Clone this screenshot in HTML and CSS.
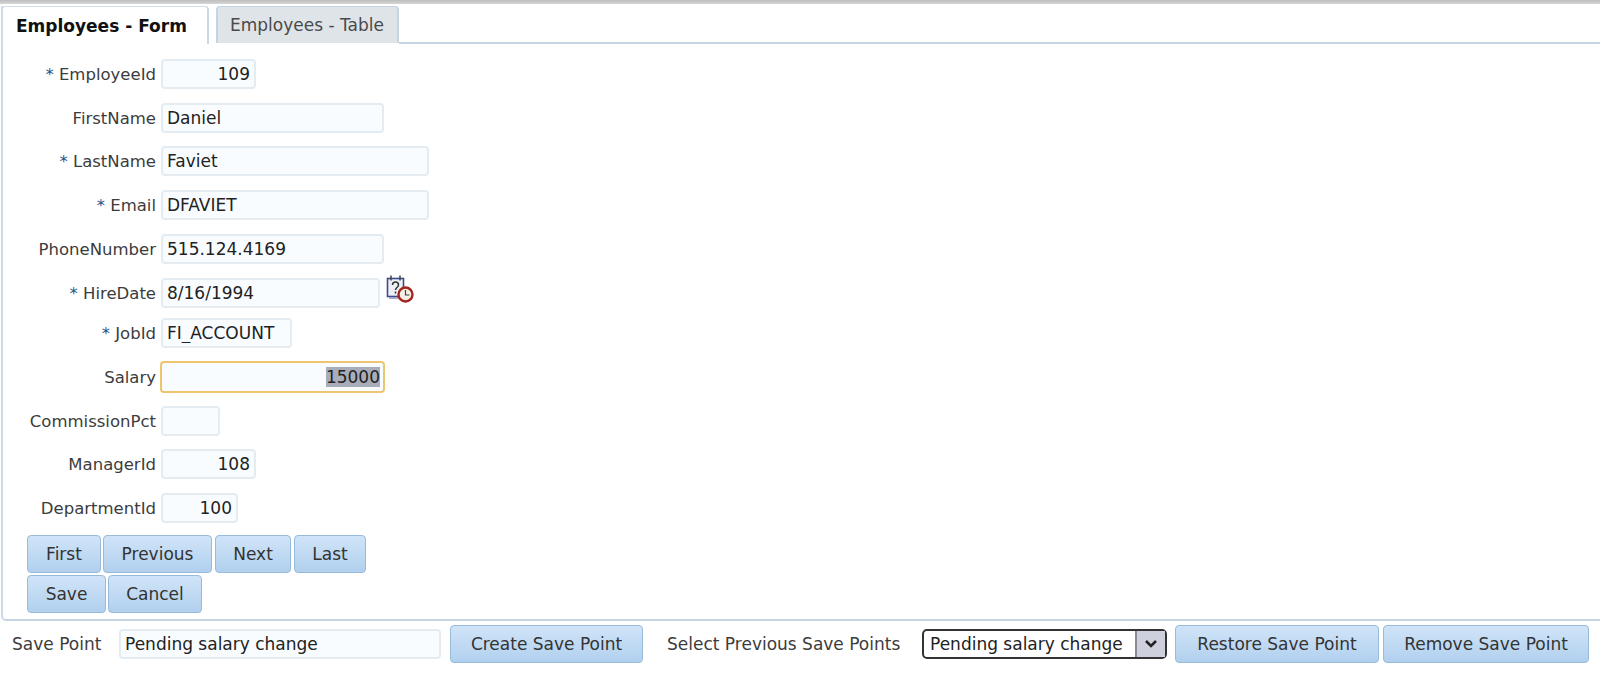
FILE: index.html
```html
<!DOCTYPE html>
<html lang="en">
<head>
<meta charset="utf-8">
<title>Employees - Form</title>
<link rel="stylesheet" href="styles.css">
</head>
<body>
<div class="topbar"></div>
<div class="panel">
  <div class="tabs">
    <div class="tab tab-active">Employees - Form</div>
    <div class="tab tab-idle">Employees - Table</div>
    <div class="tab-rest"></div>
  </div>
  <form class="form">
    <div class="row row-first"><label class="label"><span class="req">*</span> EmployeeId</label><input class="field w-95 num" value="109"></div>
    <div class="row"><label class="label">FirstName</label><input class="field w-223" value="Daniel"></div>
    <div class="row row-43"><label class="label"><span class="req">*</span> LastName</label><input class="field w-268" value="Faviet"></div>
    <div class="row"><label class="label"><span class="req">*</span> Email</label><input class="field w-268" value="DFAVIET"></div>
    <div class="row"><label class="label">PhoneNumber</label><input class="field w-223" value="515.124.4169"></div>
    <div class="row">
      <label class="label"><span class="req">*</span> HireDate</label><input class="field w-219" value="8/16/1994">
      <svg class="cal" width="30" height="30" viewBox="0 0 30 30" aria-hidden="true">
        <rect x="2.5" y="4.5" width="16" height="18" fill="#eef0f8" stroke="#3f4a8c" stroke-width="1.6"/>
        <path d="M4 24h16" stroke="#8e94bd" stroke-width="1.5"/>
        <path d="M6 1.5v5M15 1.5v5" stroke="#444" stroke-width="1.5"/>
        <path d="M7.5 11c0-4 6-4 6 0 0 2.500-3 2.500-3 5M10.500 17.500v2" fill="none" stroke="#333" stroke-width="1.500"/>
        <circle cx="20.500" cy="20.500" r="7" fill="#f6efe4" stroke="#a4241f" stroke-width="2.400"/>
        <path d="M20.500 16v5h4" fill="none" stroke="#444" stroke-width="1.200"/>
      </svg>
    </div>
    <div class="row row-40"><label class="label"><span class="req">*</span> JobId</label><input class="field w-131" value="FI_ACCOUNT"></div>
    <div class="row row-salary"><label class="label">Salary</label><input class="field field-focus num" value="15000" autofocus onfocus="this.select()"></div>
    <div class="row row-commission"><label class="label">CommissionPct</label><input class="field w-59" value=""></div>
    <div class="row row-43"><label class="label">ManagerId</label><input class="field w-95 num" value="108"></div>
    <div class="row"><label class="label">DepartmentId</label><input class="field w-77 num" value="100"></div>
    <div class="btn-row btn-row-first">
      <button type="button" class="btn b-first">First</button>
      <button type="button" class="btn b-prev">Previous</button>
      <button type="button" class="btn b-next">Next</button>
      <button type="button" class="btn b-last">Last</button>
    </div>
    <div class="btn-row">
      <button type="button" class="btn b-save">Save</button>
      <button type="button" class="btn b-cancel">Cancel</button>
    </div>
  </form>
</div>
<div class="savebar">
  <span class="sp-label">Save Point</span>
  <input class="field sp-input" value="Pending salary change">
  <button type="button" class="btn b-create">Create Save Point</button>
  <span class="sel-label">Select Previous Save Points</span>
  <div class="select-wrap">
    <select class="select"><option>Pending salary change</option></select>
    <span class="select-arrow">
      <svg width="14" height="10" viewBox="0 0 14 10" aria-hidden="true"><path d="M2 2l5 5 5-5" fill="none" stroke="#222" stroke-width="2.600"/></svg>
    </span>
  </div>
  <button type="button" class="btn b-restore">Restore Save Point</button>
  <button type="button" class="btn b-remove">Remove Save Point</button>
</div>
</body>
</html>
```
FILE: styles.css
```css
* { box-sizing: border-box; }
html, body { margin: 0; padding: 0; background: #fff; }
body {
  width: 1600px;
  height: 676px;
  overflow: hidden;
  font-family: "DejaVu Sans", sans-serif;
  font-size: 17px;
  color: #333;
}
.topbar {
  height: 4px;
  background: linear-gradient(#bdbdbd, #d6d6d6);
  margin-bottom: 2px;
}
.panel {
  height: 615px;
  margin-left: 1px;
  border-left: 2px solid #cddaea;
  border-bottom: 2px solid #c6d3e3;
  border-bottom-left-radius: 5px;
}
.tabs { display: flex; height: 38px; }
.tab {
  display: flex;
  align-items: center;
  height: 38px;
  border: 1px solid #cfdbe8;
  border-bottom: 0;
  border-radius: 4px 4px 0 0;
}
.tab-active {
  width: 207px;
  margin-left: -1px;
  padding-left: 13px;
  font-weight: bold;
  font-size: 17px;
  color: #111;
  background: #fff;
  border-right: 2px solid #cad7e6;
}
.tab-idle {
  width: 183px;
  margin-left: 7px;
  padding-left: 12px;
  height: 37px;
  color: #4a4a4a;
  background: #dfe4e9;
  border-color: #c5d3e2;
  border-left-width: 2px;
  border-right-width: 2px;
}
.tab-rest { flex: 1; height: 38px; border-bottom: 2px solid #c6d3e3; }
.form { padding-top: 15px; padding-left: 23px; }
.row { display: flex; align-items: center; height: 30px; margin-top: 14px; }
.row-first { margin-top: 0; }
.row-43 { margin-top: 13px; }
.row-40 { margin-top: 10px; }
.row-salary { margin-top: 13px; height: 32px; }
.row-commission { margin-top: 13px; }
.label {
  width: 130px;
  margin-right: 5px;
  text-align: right;
  white-space: nowrap;
  color: #3c3c3c;
  font-size: 16.5px;
}
.req { color: #1d4f86; }
.field {
  height: 30px;
  padding: 0 4px;
  border: 2px solid #e4ecf1;
  border-radius: 4px;
  background: #f9fcff;
  font: inherit;
  color: #222;
  outline: none;
}
.field::selection { background: #a9adb9; color: #222; }
.num { text-align: right; }
.w-59 { width: 59px; }
.w-77 { width: 77px; }
.w-95 { width: 95px; }
.w-131 { width: 131px; }
.w-219 { width: 219px; }
.w-223 { width: 223px; }
.w-268 { width: 268px; }
.field-focus {
  width: 225px;
  height: 32px;
  margin-left: -1px;
  border: 2px solid #efc46f;
  padding-right: 3px;
}
.cal { margin-left: 5px; margin-top: -9px; }
.btn-row { display: flex; margin-left: 1px; gap: 2px; }
.btn-row-first { margin-top: 12px; margin-bottom: 2px; }
.btn {
  height: 38px;
  padding: 0;
  border: 1px solid #97bbda;
  border-radius: 4px;
  background: linear-gradient(#d0e4f8, #b1d0ee);
  font: inherit;
  color: #333;
}
.b-first { width: 74px; }
.b-prev { width: 109px; }
.b-next { width: 76px; margin-left: 1px; }
.b-last { width: 72px; margin-left: 1px; }
.b-save { width: 79px; }
.b-cancel { width: 94px; }
.savebar { display: flex; align-items: center; height: 38px; margin-top: 4px; padding-left: 12px; }
.sp-label { width: 107px; color: #3c3c3c; }
.sp-input { width: 322px; }
.b-create { width: 193px; margin-left: 9px; }
.sel-label { margin-left: 24px; width: 255px; color: #3c3c3c; white-space: nowrap; }
.select-wrap { position: relative; width: 245px; height: 30px; }
.select {
  width: 100%;
  height: 30px;
  padding: 0 0 0 6px;
  appearance: none;
  border: 2px solid #333;
  border-radius: 5px;
  background: #fff;
  font: inherit;
  color: #222;
}
.select-arrow {
  position: absolute;
  top: 2px;
  right: 2px;
  width: 30px;
  height: 26px;
  display: flex;
  align-items: center;
  justify-content: center;
  border-left: 2px solid #8a8a95;
  background: #cfd0de;
}
.b-restore { width: 204px; margin-left: 8px; }
.b-remove { width: 206px; margin-left: 4px; }
```
